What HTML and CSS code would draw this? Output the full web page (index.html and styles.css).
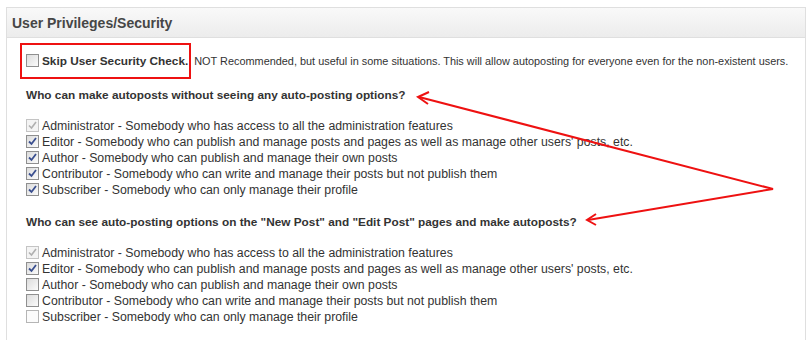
FILE: index.html
```html
<!DOCTYPE html>
<html lang="en">
<head>
  <meta charset="UTF-8">
  <title>User Privileges/Security</title>
  <link rel="stylesheet" href="styles.css">
</head>
<body>

  <div class="postbox">
    <h3 class="postbox-title">User Privileges/Security</h3>
    <div class="postbox-inside">

      <div class="skip-row">
        <label class="skip-box"><input type="checkbox" class="cb"><span class="skip-label">Skip User Security Check.</span></label>
        <span class="skip-note">NOT Recommended, but useful in some situations. This will allow autoposting for everyone even for the non-existent users.</span>
      </div>

      <p class="question">Who can make autoposts without seeing any auto-posting options?</p>
      <div class="role-list">
        <label class="role"><input type="checkbox" class="cb" checked disabled>Administrator - Somebody who has access to all the administration features</label>
        <label class="role"><input type="checkbox" class="cb" checked>Editor - Somebody who can publish and manage posts and pages as well as manage other users' posts, etc.</label>
        <label class="role"><input type="checkbox" class="cb" checked>Author - Somebody who can publish and manage their own posts</label>
        <label class="role"><input type="checkbox" class="cb" checked>Contributor - Somebody who can write and manage their posts but not publish them</label>
        <label class="role"><input type="checkbox" class="cb" checked>Subscriber - Somebody who can only manage their profile</label>
      </div>

      <p class="question">Who can see auto-posting options on the "New Post" and "Edit Post" pages and make autoposts?</p>
      <div class="role-list">
        <label class="role"><input type="checkbox" class="cb" checked disabled>Administrator - Somebody who has access to all the administration features</label>
        <label class="role"><input type="checkbox" class="cb" checked>Editor - Somebody who can publish and manage posts and pages as well as manage other users' posts, etc.</label>
        <label class="role"><input type="checkbox" class="cb">Author - Somebody who can publish and manage their own posts</label>
        <label class="role"><input type="checkbox" class="cb">Contributor - Somebody who can write and manage their posts but not publish them</label>
        <label class="role"><input type="checkbox" class="cb cb-light">Subscriber - Somebody who can only manage their profile</label>
      </div>

    </div>
  </div>

  <!-- annotation arrows drawn over the screenshot -->
  <svg class="annotation" width="812" height="340" viewBox="0 0 812 340">
    <g fill="none" stroke="#ee1111" stroke-width="2" stroke-linejoin="miter">
      <polyline points="419,97 773,189 588,220"/>
      <polyline points="429,92 418,97 428,104"/>
      <polyline points="596,214 587,220 596,225"/>
    </g>
  </svg>

</body>
</html>
```

FILE: styles.css
```css
body {
  margin: 0;
  background-color: #fff;
  font-family: "Liberation Sans", Arial, sans-serif;
  color: #333;
}
.postbox {
  position: relative;
  width: 800px;
  margin: 7px 6px 0 6px;
  border: 1px solid #dfdfdf;
  border-bottom: none;
  box-sizing: border-box;
}
.postbox-title {
  margin: 0;
  height: 29px;
  padding: 0 11px 0 5px;
  line-height: 30px;
  font-size: 14px;
  font-weight: bold;
  color: #464646;
  background: linear-gradient(to bottom, #f9f9f9, #ececec);
  border-bottom: 1px solid #dfdfdf;
}
.postbox-inside {
  padding: 5px 13px 40px 13px;
}
.skip-row {
  font-size: 10.9px;
  line-height: 14px;
  white-space: nowrap;
}
.skip-box {
  display: inline-block;
  padding: 9px 1px 9px 4px;
  border: 2px solid #ee1111;
}
.skip-label {
  font-size: 11.8px;
  font-weight: bold;
}
.question {
  margin: 8px 0 15px 6px;
  font-size: 11.8px;
  line-height: 16px;
  font-weight: bold;
}
.role-list {
  margin: 0 0 16px 6px;
}
.role {
  display: block;
  font-size: 12.3px;
  line-height: 16px;
  white-space: nowrap;
}
.cb {
  -webkit-appearance: none;
  appearance: none;
  width: 13px;
  height: 13px;
  margin: 0 3px 0 0;
  vertical-align: -2px;
  border: 1px solid #8f8f8f;
  background: linear-gradient(135deg, #dcdcdc, #fbfbfb);
  box-sizing: border-box;
}
.cb:checked {
  background: url("data:image/svg+xml,%3Csvg xmlns='http://www.w3.org/2000/svg' width='11' height='11'%3E%3Cpath d='M2 5.5 L4.5 8 L9 2' fill='none' stroke='%233a4f8f' stroke-width='1.8'/%3E%3C/svg%3E") center no-repeat, linear-gradient(135deg, #dcdcdc, #fbfbfb);
}
.cb:disabled {
  border-color: #c4c4c4;
  background: url("data:image/svg+xml,%3Csvg xmlns='http://www.w3.org/2000/svg' width='11' height='11'%3E%3Cpath d='M2 5.5 L4.5 8 L9 2' fill='none' stroke='%23b0b0b0' stroke-width='1.6'/%3E%3C/svg%3E") center no-repeat, #f4f4f4;
}
.cb-light {
  border-color: #b5b5b5;
  background: #fbfbfb;
}
.annotation {
  position: absolute;
  top: 0;
  left: 0;
  pointer-events: none;
}
```
